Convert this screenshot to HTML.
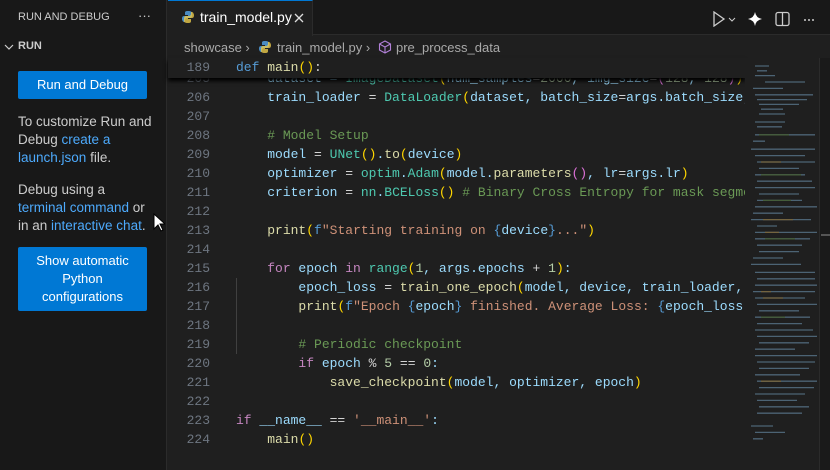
<!DOCTYPE html>
<html><head><meta charset="utf-8"><style>
*{margin:0;padding:0;box-sizing:border-box}
body{width:830px;height:470px;background:#1f1f1f;overflow:hidden;font-family:"Liberation Sans",sans-serif;position:relative;color:#ccc}
#side{position:absolute;left:0;top:0;width:167px;height:470px;background:#181818;border-right:1px solid #2b2b2b}
.t{position:absolute;font-size:13px;color:#cccccc;white-space:nowrap}
.btn{position:absolute;left:18px;width:129px;background:#0078d4;color:#fff;font-size:13px;text-align:center;border-radius:2px}
a{color:#4daafc;text-decoration:none}
#tabs{position:absolute;left:168px;top:0;right:0;height:35px;background:#181818;border-bottom:1px solid #2b2b2b}
#tab{position:absolute;left:168px;top:0;width:145px;height:36px;background:#1f1f1f;border-top:1px solid #0078d4;border-right:1px solid #2b2b2b}
.code{position:absolute;left:168px;top:69px;font-family:"Liberation Mono",monospace;font-size:13px;line-height:19px;white-space:pre;color:#9cdcfe}
.ln{position:absolute;left:168px;width:42px;text-align:right;color:#6e7681}
.k{color:#569cd6}.c{color:#c586c0}.f{color:#dcdcaa}.cl{color:#4ec9b0}.s{color:#ce9178}.cm{color:#6a9955}.n{color:#b5cea8}.y{color:#ffd700}.p{color:#da70d6}.b{color:#179fff}.w{color:#d4d4d4}
</style></head><body>
<div id="side">
<div class="t" style="left:18px;top:11px;font-size:11px">RUN AND DEBUG</div>
<div class="t" style="left:138px;top:8px;font-size:13px">···</div>
<svg style="position:absolute;left:4px;top:42px" width="10" height="10"><path d="M1 3l4 4 4-4" stroke="#ccc" fill="none" stroke-width="1.2"/></svg>
<div class="t" style="left:18px;top:40px;font-size:11px;font-weight:bold">RUN</div>
<div class="btn" style="top:71px;height:28px;line-height:28px">Run and Debug</div>
<div class="t" style="left:18px;top:113px;line-height:18px;font-size:13.5px">To customize Run and<br>Debug <a>create a</a><br><a>launch.json</a> file.</div>
<div class="t" style="left:18px;top:181px;line-height:18px;font-size:13.5px">Debug using a<br><a>terminal command</a> or<br>in an <a>interactive chat</a>.</div>
<div class="btn" style="top:247px;height:64px;line-height:18px;padding-top:5px">Show automatic<br>Python<br>configurations</div>
</div>
<svg style="position:absolute;left:153px;top:213px" width="12" height="20"><path d="M1 1v15l4-4 3 6 2-1-3-6h5z" fill="#fff" stroke="#000" stroke-width="1"/></svg>
<div id="tabs"></div>
<div id="tab"></div>
<svg style="position:absolute;left:182px;top:11px" width="12" height="12"><path d="M6 0C3 0 3 1 3 2v2h3v1H2C0 5 0 7 0 8s1 3 2 3h1V9c0-1 1-2 2-2h3c1 0 2-1 2-2V2c0-1-1-2-4-2z" fill="#4a8bc2"/><path d="M6 12c3 0 3-1 3-2V8H6V7h4c2 0 2-2 2-3s-1-3-2-3H9v2c0 1-1 2-2 2H4C3 5 2 6 2 7v3c0 1 1 2 4 2z" fill="#e8c84a" opacity=".8"/></svg>
<div class="t" style="left:200px;top:9px;font-size:14px;color:#fff">train_model.py</div>
<svg style="position:absolute;left:294px;top:13px" width="10" height="10"><path d="M1 1l8 8M9 1l-8 8" stroke="#ddd" stroke-width="1.3"/></svg>
<svg style="position:absolute;left:712px;top:11px" width="110" height="16"><path d="M2 1l10 7-10 7z" stroke="#ccc" fill="none" stroke-width="1.3"/><path d="M17 7l3 3 3-3" stroke="#ccc" fill="none"/><path d="M43 1q1 6 7 7q-6 1-7 7q-1-6-7-7q6-1 7-7z" fill="#fff"/><rect x="64" y="1.5" width="13" height="13" rx="2" stroke="#ccc" fill="none" stroke-width="1.3"/><path d="M70.5 2v12" stroke="#ccc" stroke-width="1.3"/><circle cx="93" cy="9" r="1" fill="#ccc"/><circle cx="97" cy="9" r="1" fill="#ccc"/><circle cx="101" cy="9" r="1" fill="#ccc"/></svg>
<div class="t" style="left:184px;top:40px;color:#a9a9a9">showcase <span style="color:#a9a9a9">›</span></div>
<svg style="position:absolute;left:259px;top:41px" width="12" height="12"><path d="M6 0C3 0 3 1 3 2v2h3v1H2C0 5 0 7 0 8s1 3 2 3h1V9c0-1 1-2 2-2h3c1 0 2-1 2-2V2c0-1-1-2-4-2z" fill="#4a8bc2"/><path d="M6 12c3 0 3-1 3-2V8H6V7h4c2 0 2-2 2-3s-1-3-2-3H9v2c0 1-1 2-2 2H4C3 5 2 6 2 7v3c0 1 1 2 4 2z" fill="#e8c84a" opacity=".8"/></svg>
<div class="t" style="left:277px;top:40px;color:#a9a9a9">train_model.py ›</div>
<svg style="position:absolute;left:378px;top:40px" width="14" height="14"><path d="M7 1l5.5 3v6L7 13 1.5 10V4z M1.5 4L7 7l5.5-3 M7 7v6" stroke="#b180d7" fill="none" stroke-width="1.1"/></svg>
<div class="t" style="left:396px;top:40px;color:#a9a9a9">pre_process_data</div>

<div class="ln code" style="top:69px">205
206
207
208
209
210
211
212
213
214
215
216
217
218
219
220
221
222
223
224</div>
<div class="code" style="left:236px">    dataset = <span class="cl">ImageDataset</span><span class="y">(</span>num_samples<span class="w">=</span><span class="n">2000</span>, img_size<span class="w">=</span><span class="p">(</span><span class="n">128</span>, <span class="n">128</span><span class="p">)</span><span class="y">)</span>
    train_loader <span class="w">=</span> <span class="cl">DataLoader</span><span class="y">(</span>dataset, batch_size<span class="w">=</span>args.batch_size,

    <span class="cm"># Model Setup</span>
    model <span class="w">=</span> <span class="cl">UNet</span><span class="y">()</span>.<span class="f">to</span><span class="y">(</span>device<span class="y">)</span>
    optimizer <span class="w">=</span> <span class="cl">optim</span>.<span class="cl">Adam</span><span class="y">(</span>model.<span class="f">parameters</span><span class="p">()</span>, lr<span class="w">=</span>args.lr<span class="y">)</span>
    criterion <span class="w">=</span> <span class="cl">nn</span>.<span class="cl">BCELoss</span><span class="y">()</span> <span class="cm"># Binary Cross Entropy for mask segme</span>

    <span class="f">print</span><span class="y">(</span><span class="k">f</span><span class="s">"Starting training on </span><span class="k">{</span>device<span class="k">}</span><span class="s">..."</span><span class="y">)</span>

    <span class="c">for</span> epoch <span class="c">in</span> <span class="cl">range</span><span class="y">(</span><span class="n">1</span>, args.epochs <span class="w">+</span> <span class="n">1</span><span class="y">)</span>:
        epoch_loss <span class="w">=</span> <span class="f">train_one_epoch</span><span class="y">(</span>model, device, train_loader,
        <span class="f">print</span><span class="y">(</span><span class="k">f</span><span class="s">"Epoch </span><span class="k">{</span>epoch<span class="k">}</span><span class="s"> finished. Average Loss: </span><span class="k">{</span>epoch_loss:

        <span class="cm"># Periodic checkpoint</span>
        <span class="c">if</span> epoch <span class="w">%</span> <span class="n">5</span> <span class="w">==</span> <span class="n">0</span>:
            <span class="f">save_checkpoint</span><span class="y">(</span>model, optimizer, epoch<span class="y">)</span>

<span class="c">if</span> __name__ <span class="w">==</span> <span class="s">'__main__'</span>:
    <span class="f">main</span><span class="y">()</span></div>
<div style="position:absolute;left:236px;top:278px;width:1px;height:76px;background:#404040"></div>
<div style="position:absolute;left:168px;top:58px;width:577px;height:20px;background:#1f1f1f;box-shadow:0 3px 4px #000"></div>
<div class="ln code" style="top:58px">189</div>
<div class="code" style="left:236px;top:58px"><span class="k">def</span> <span class="f">main</span><span class="y">()</span><span class="w">:</span></div>
<svg style="position:absolute;left:745px;top:58px" width="85" height="412">
<rect x="0" y="0" width="74" height="412" fill="#1f1f1f"/>
<rect x="74" y="0" width="11" height="412" fill="#1a1a1a"/><rect x="74" y="0" width="1" height="412" fill="#2b2b2b"/>
<g stroke-width="0.8" opacity=".5" transform="scale(1,1.6)">
<path d="M10 5h14M12 8h10M10 11h20M20 15h40M8 19h30M10 23h58M12 26h50M14 29h40M16 32h22M14 35h26M10 40h30M12 43h25M10 48h60M8 52h12M6 57h64M10 61h50M12 65h58M14 69h40M10 73h50M12 77h55M10 81h60M14 85h40M12 89h45M10 93h62M8 97h30M6 101h60M12 105h20M10 109h62M10 113h55M12 117h45M14 121h40M8 125h30M6 129h50M10 134h60M12 138h58M10 142h62M8 146h62M10 150h50M12 154h60M14 158h40M10 162h55M12 166h45M10 170h58M12 174h60M14 178h50M10 182h40M10 186h62M12 190h58M14 194h50M10 198h45M12 202h60M14 206h55M10 210h50M12 214h40M14 218h50M12 222h45M6 230h22M10 234h30M8 238h10" stroke="#7aa6c8"/>
<path d="M16 65h20M18 101h30M20 109h14M16 146h10M18 150h20M16 202h20" stroke="#c8a860"/>
<path d="M14 48h30M16 73h40M18 89h28M20 113h30M16 162h24" stroke="#6a9955"/>
</g>
<rect x="76" y="176" width="9" height="2" fill="#555"/>
</svg>
</body></html>
